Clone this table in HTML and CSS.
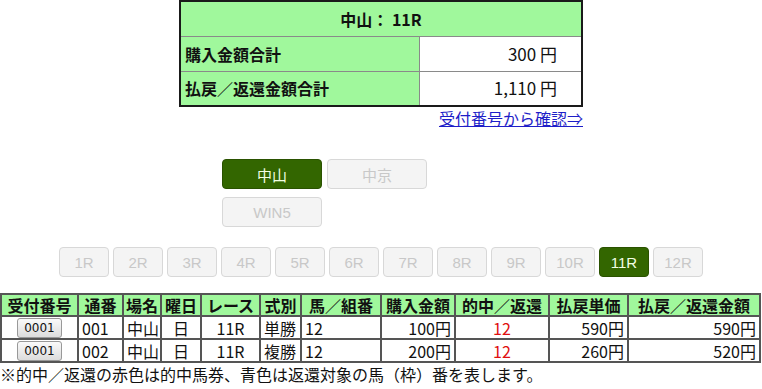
FILE: index.html
```html
<html lang="ja">
<head>
	<meta http-equiv="Content-Type" content="text/html; charset=utf-8">
	<meta name="viewport" content="width=device-width, initial-scale=1.0">
	<title>照会結果</title>
	<link rel="stylesheet" href="styles.css">
</head>
<body>

	<div class="summary-wrap">
		<table class="summary">
			<colgroup>
				<col class="label-col">
				<col>
			</colgroup>
			<tr>
				<th colspan="2">中山： 11R</th>
			</tr>
			<tr>
				<td class="label">購入金額合計</td>
				<td class="amount">300 円</td>
			</tr>
			<tr>
				<td class="label">払戻／返還金額合計</td>
				<td class="amount">1,110 円</td>
			</tr>
		</table>
		<div class="confirm-link"><a href="#">受付番号から確認⇒</a></div>
	</div>

	<div class="venues">
		<button class="btn active">中山</button>
		<button class="btn" disabled>中京</button>
		<button class="btn" disabled>WIN5</button>
	</div>

	<div class="races">
		<button class="btn race" disabled>1R</button>
		<button class="btn race" disabled>2R</button>
		<button class="btn race" disabled>3R</button>
		<button class="btn race" disabled>4R</button>
		<button class="btn race" disabled>5R</button>
		<button class="btn race" disabled>6R</button>
		<button class="btn race" disabled>7R</button>
		<button class="btn race" disabled>8R</button>
		<button class="btn race" disabled>9R</button>
		<button class="btn race" disabled>10R</button>
		<button class="btn race active">11R</button>
		<button class="btn race" disabled>12R</button>
	</div>

	<table class="results">
		<colgroup>
			<col style="width:77px">
			<col style="width:45px">
			<col style="width:38px">
			<col style="width:40px">
			<col style="width:59px">
			<col style="width:41px">
			<col style="width:80px">
			<col style="width:74px">
			<col style="width:94px">
			<col style="width:79px">
			<col>
		</colgroup>
		<tr>
			<th>受付番号</th>
			<th>通番</th>
			<th>場名</th>
			<th>曜日</th>
			<th>レース</th>
			<th>式別</th>
			<th>馬／組番</th>
			<th>購入金額</th>
			<th>的中／返還</th>
			<th>払戻単価</th>
			<th>払戻／返還金額</th>
		</tr>
		<tr>
			<td class="c"><button class="ticket">0001</button></td>
			<td>001</td>
			<td>中山</td>
			<td class="c">日</td>
			<td class="c">11R</td>
			<td>単勝</td>
			<td>12</td>
			<td class="r">100円</td>
			<td class="c hit">12</td>
			<td class="r">590円</td>
			<td class="r">590円</td>
		</tr>
		<tr>
			<td class="c"><button class="ticket">0001</button></td>
			<td>002</td>
			<td>中山</td>
			<td class="c">日</td>
			<td class="c">11R</td>
			<td>複勝</td>
			<td>12</td>
			<td class="r">200円</td>
			<td class="c hit">12</td>
			<td class="r">260円</td>
			<td class="r">520円</td>
		</tr>
	</table>
	<p class="note">※的中／返還の赤色は的中馬券、青色は返還対象の馬（枠）番を表します。</p>

</body>
</html>
```

FILE: styles.css
```css
body{
	margin: 0;
	padding: 0;
	font-family: "Noto Sans CJK JP", sans-serif;
	font-size: 16px;
	color: #111;
	background: #fff;
}

/* 合計テーブル */
.summary-wrap{
	width: 404px;
	margin: 0 auto;
}

.summary{
	width: 100%;
	border-collapse: collapse;
	border: 2px solid #1a1a1a;
	table-layout: fixed;
}

.summary .label-col{
	width: 239px;
}

.summary th,
.summary td{
	height: 35px;
	padding: 0;
	line-height: 20px;
	border: 1px solid #8a8a8a;
}

.summary th{
	background: #a0f89c;
	font-weight: bold;
	text-align: center;
}

.summary .label{
	padding-left: 4px;
	background: #a0f89c;
	font-weight: bold;
}

.summary .amount{
	text-align: right;
	padding-right: 24px;
	font-size: 17px;
}

.confirm-link{
	text-align: right;
	line-height: 22px;
}

.confirm-link a{
	color: #1e1ec8;
}

/* 場・レース切替ボタン */
.btn{
	height: 30px;
	padding: 0;
	border: 1px solid #d8d8d8;
	border-radius: 4px;
	background: #f4f4f4;
	color: #c8c8c8;
	font-family: "Liberation Sans", "Noto Sans CJK JP", sans-serif;
	font-size: 15px;
}

.btn.active{
	background: #336600;
	border-color: #2a5200;
	color: #f2ffe4;
}

.venues{
	width: 318px;
	margin: 30px auto 0;
	display: grid;
	grid-template-columns: repeat(2, 100px);
	gap: 8px 5px;
}

.races{
	display: flex;
	justify-content: center;
	gap: 4px;
	margin-top: 20px;
}

.race{
	width: 50px;
}

/* 明細テーブル */
.results{
	width: 761px;
	margin-top: 16px;
	border-collapse: collapse;
	table-layout: fixed;
	border: 2px solid #555;
}

.results th,
.results td{
	border: 2px solid #555;
	padding: 0 3px;
	line-height: 20px;
	white-space: nowrap;
}

.results th{
	height: 22px;
	background: #a0f89c;
	font-weight: bold;
	text-align: center;
	padding: 0;
}

.results td{
	height: 23px;
}

.results .c{
	text-align: center;
}

.results .r{
	text-align: right;
}

.results .hit{
	color: #e01010;
}

.ticket{
	width: 45px;
	height: 20px;
	padding: 0;
	border: 1px solid #999;
	border-radius: 3px;
	background: linear-gradient(#fafafa, #dcdcdc);
	font-family: "DejaVu Sans", sans-serif;
	font-size: 12px;
	color: #111;
	vertical-align: middle;
}

.note{
	margin: 0;
	line-height: 22px;
}
```
